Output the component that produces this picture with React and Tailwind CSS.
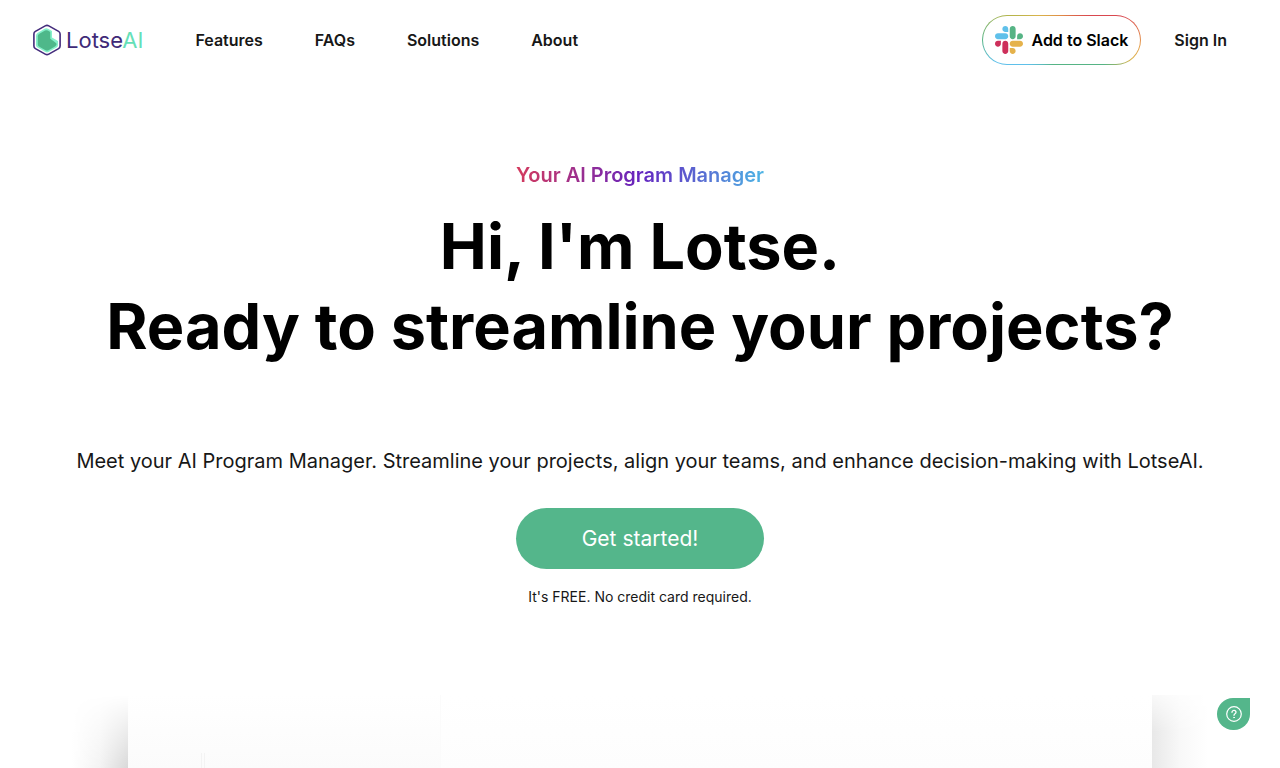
const navItems = ["Features", "FAQs", "Solutions", "About"];

function Logo() {
  return (
    <a href="#" aria-label="LotseAI" className="flex items-center gap-1">
      <svg width="30" height="32" viewBox="0 0 30 32" fill="none" aria-hidden="true">
        <path d="M13.2 1.9a3.6 3.6 0 0 1 3.6 0l9.8 5.5a3 3 0 0 1 1.5 2.6v12a3 3 0 0 1-1.5 2.6l-9.8 5.5a3.6 3.6 0 0 1-3.6 0l-9.8-5.5A3 3 0 0 1 1.9 22V10a3 3 0 0 1 1.5-2.6z" stroke="#442c7c" strokeWidth="1.6" />
        <path d="M12.500 4.800 5.500 9Q4 10 4 12v9q0 1.600 1.500 2.500l8 4.500q1.500.800 3 0l8-4.500Q26 22.500 26 21v-4l-6-3.500V7l-4-2.200q-1.800-1-3.500 0z" fill="#86f0ca" />
        <path d="M13 6.500 7 10Q5.800 10.800 5.800 12v8.500q0 1.500 1.500 2.300l6.200 3.500q1.500.700 3 0l6.500-3.700q2.500-1.800 1-3.500l-5.700-4.300V8l-2.500-1.500q-1.500-.700-2.800 0z" fill="#4eb88a" />
      </svg>
      <span className="text-[22px] leading-8 font-normal text-[#3f2a78]">
        Lotse<span className="text-[#65e0b8]">AI</span>
      </span>
    </a>
  );
}

function SlackMark() {
  return (
    <svg width="28" height="28" viewBox="0 0 122.8 122.8" aria-hidden="true">
      <path fill="#cd2f5b" d="M25.800 77.600c0 7.100-5.800 12.900-12.900 12.900S0 84.700 0 77.600s5.800-12.900 12.900-12.900h12.900v12.900zm6.500 0c0-7.100 5.800-12.900 12.900-12.900s12.900 5.800 12.900 12.900v32.300c0 7.100-5.800 12.900-12.900 12.900s-12.900-5.800-12.900-12.900V77.600z" />
      <path fill="#5fc0ea" d="M45.200 25.800c-7.100 0-12.900-5.800-12.900-12.900S38.100 0 45.200 0s12.900 5.800 12.900 12.900v12.900H45.200zm0 6.500c7.100 0 12.900 5.800 12.900 12.900s-5.800 12.900-12.900 12.900H12.900C5.800 58.100 0 52.300 0 45.200s5.800-12.900 12.900-12.900h32.300z" />
      <path fill="#56b485" d="M97 45.200c0-7.100 5.800-12.900 12.900-12.900s12.900 5.800 12.900 12.900-5.800 12.900-12.900 12.900H97V45.200zm-6.500 0c0 7.100-5.800 12.900-12.900 12.900s-12.900-5.800-12.900-12.900V12.900C64.700 5.800 70.500 0 77.600 0s12.900 5.800 12.900 12.900v32.300z" />
      <path fill="#e5b24b" d="M77.600 97c7.100 0 12.900 5.800 12.900 12.900s-5.800 12.900-12.900 12.900-12.900-5.800-12.900-12.900V97h12.900zm0-6.500c-7.100 0-12.900-5.800-12.900-12.900s5.800-12.900 12.900-12.900h32.300c7.100 0 12.900 5.800 12.900 12.900s-5.800 12.900-12.900 12.900H77.600z" />
    </svg>
  );
}

function Header() {
  return (
    <header className="flex h-20 items-center justify-between pl-8 pr-[53px] text-base font-semibold text-[#171717]">
      <div className="flex items-center gap-[52px]">
        <Logo />
        <nav className="flex items-center gap-[52px]">
          {navItems.map((item) => (
            <a key={item} href={"#" + item.toLowerCase()}>{item}</a>
          ))}
        </nav>
      </div>
      <div className="flex items-center gap-[33px]">
        <a
          href="#slack"
          className="flex h-[50px] items-center gap-2 rounded-full border border-transparent px-3 text-black [background:linear-gradient(white,white)_padding-box,conic-gradient(#e08a45,#d9484f_50deg,#d9484f_70deg,#e5a04b_95deg,#d9b44b_106deg,#56b485_120deg,#56b485_200deg,#5fc0ea_235deg,#5fc0ea_252deg,#56b485_270deg,#b5b54b_295deg,#d9b44b_315deg,#e08a45)_border-box]"
        >
          <SlackMark />
          Add to Slack
        </a>
        <a href="#signin">Sign In</a>
      </div>
    </header>
  );
}

function Preview() {
  return (
    <section aria-label="Product preview" className="mt-[86px] grid h-[74px] grid-cols-[1fr_8fr_1fr] overflow-hidden">
      <div className="flex justify-end">
        <div className="w-14 bg-linear-to-l from-[#d8d8d8] via-[#f3f3f3] to-white mask-t-from-0% mask-t-to-100%" />
      </div>
      <div className="grid grid-cols-[313px_1fr] bg-linear-to-b from-white to-[#fdfdfd]">
        <div className="flex items-end border-r border-[#fbfbfb] bg-linear-to-b from-white to-[#fbfbfb] pl-[73px]">
          <div className="h-4 w-1 border-x border-[#f3f3f3]" />
        </div>
      </div>
      <div>
        <div className="h-full w-14 bg-linear-to-r from-[#e8e8e8] via-[#f8f8f8] to-white mask-t-from-50% mask-t-to-120%" />
      </div>
    </section>
  );
}

export default function App() {
  return (
    <div className="h-screen overflow-hidden bg-white font-[Inter,sans-serif] text-[#171717]">
      <Header />
      <main className="text-center">
        <div className="flex flex-col items-center pt-20">
          <p className="bg-linear-to-r/srgb from-[#d53a5c] via-[#6424c0] to-[#4db5e5] bg-clip-text text-xl leading-[30px] font-semibold text-transparent">
            Your AI Program Manager
          </p>
          <h1 className="mt-4 text-[63px] leading-[80px] font-bold text-black">
            Hi, I&apos;m Lotse.
            <br />
            Ready to streamline your projects?
          </h1>
          <p className="mt-20 text-xl leading-[30px]">
            Meet your AI Program Manager. Streamline your projects, align your teams, and enhance decision-making with LotseAI.
          </p>
          <button type="button" className="mt-8 h-[61px] w-[248px] rounded-full bg-[#54b68b] text-[21px] text-white">
            Get started!
          </button>
          <p className="mt-4 text-sm leading-6">It&apos;s FREE. No credit card required.</p>
        </div>
        <Preview />
      </main>
      <button
        type="button"
        aria-label="Help"
        className="fixed right-[30px] bottom-[38px] flex h-8 w-[33px] items-center justify-center rounded-full rounded-tr-sm bg-[#54b68b]"
      >
        <svg width="16" height="16" viewBox="0 0 16 16" fill="none" stroke="white" strokeLinecap="round" aria-hidden="true">
          <circle cx="8" cy="8" r="7.300" strokeWidth="1.200" />
          <path d="M6 6.300C6 3.800 10 3.800 10 6.300 10 7.800 8 7.700 8 9.300" strokeWidth="1.300" />
          <circle cx="8" cy="11.500" r=".4" fill="white" strokeWidth=".8" />
        </svg>
      </button>
    </div>
  );
}
